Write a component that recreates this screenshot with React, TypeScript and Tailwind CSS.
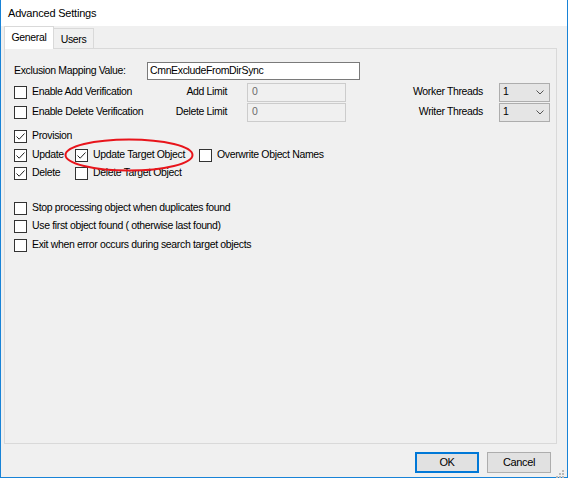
import React from "react";

const Check = ({ checked = false }: { checked?: boolean }) => (
  <span className="relative flex h-[13px] w-[13px] shrink-0 items-center justify-center border border-[#333333] bg-white">
    {checked && (
      <svg width="11" height="11" viewBox="0 0 11 11" className="absolute left-0 top-0">
        <path d="M1.5 5.5 L4.2 8.2 L9.5 2.5" fill="none" stroke="#222" strokeWidth="1" />
      </svg>
    )}
  </span>
);

const CheckItem = ({ label, checked = false, className = "" }: { label?: string; checked?: boolean; className?: string }) => (
  <div className={`flex items-center gap-[5px] ${className}`}>
    <Check checked={checked} />
    {label && <span className="whitespace-nowrap">{label}</span>}
  </div>
);

const Select = () => (
  <div className="flex h-[19px] w-[51px] items-center justify-between border border-[#adadad] bg-[#e5e5e5] pl-[3px] pr-[5px]">
    <span>1</span>
    <svg width="8" height="5" viewBox="0 0 8 5">
      <path d="M0.5 0.5 L4 4 L7.5 0.5" fill="none" stroke="#555" strokeWidth="1" />
    </svg>
  </div>
);

const LimitInput = () => (
  <div className="flex h-[19px] w-[99px] items-center border border-[#cccccc] bg-[#f0f0f0] pl-[4px] text-[#6d6d6d]">0</div>
);

export default function App() {
  return (
    <div
      className="flex h-[478px] w-[568px] flex-col border-x border-b border-[#1883d7] bg-[#f0f0f0] text-[10.5px] tracking-[-0.35px] text-black"
      style={{ fontFamily: '"Liberation Sans", Arial, sans-serif' }}
    >
      {/* title bar */}
      <div className="flex h-[26px] items-center bg-white pl-[7px] text-[11px] tracking-[-0.2px]">Advanced Settings</div>

      {/* tabs */}
      <div className="flex h-[22px] items-end pl-[3px]">
        <div className="relative z-10 -mb-px flex h-[23px] w-[50px] items-center justify-center border border-b-0 border-[#d9d9d9] bg-white">
          General
        </div>
        <div className="flex h-[20px] w-[40px] items-center justify-center border border-b-0 border-l-0 border-[#d9d9d9] bg-[#f0f0f0] pt-[2px]">
          Users
        </div>
      </div>

      {/* panel */}
      <div className="relative ml-[3px] h-[396px] w-[553px] border border-[#d9d9d9] bg-[#f0f0f0] pl-[9px] pt-[13px]">
        <div className="flex h-[18px] items-center">
          <span className="w-[133px]">Exclusion Mapping Value:</span>
          <div className="flex h-[18px] w-[213px] items-center border border-[#7a7a7a] bg-white pl-[2px]">CmnExcludeFromDirSync</div>
        </div>

        <div className="mt-[2px] flex h-[20px] items-center">
          <div className="flex w-[213px] items-center justify-between">
            <CheckItem label="Enable Add Verification" />
            <span>Add Limit</span>
          </div>
          <div className="ml-[20px]">
            <LimitInput />
          </div>
          <span className="w-[137px] text-right">Worker Threads</span>
          <div className="ml-[16px]">
            <Select />
          </div>
        </div>

        <div className="flex h-[20px] items-center">
          <div className="flex w-[213px] items-center justify-between">
            <CheckItem label="Enable Delete Verification" />
            <span>Delete Limit</span>
          </div>
          <div className="ml-[20px]">
            <LimitInput />
          </div>
          <span className="w-[137px] text-right">Writer Threads</span>
          <div className="ml-[16px]">
            <Select />
          </div>
        </div>

        <div className="mt-[5px] flex h-[18px] items-center">
          <CheckItem label="Provision" checked />
        </div>
        <div className="mt-px flex h-[18px] items-center">
          <CheckItem label="Update" checked className="w-[61px]" />
          <CheckItem label="Update Target Object" checked className="w-[124px]" />
          <CheckItem label="Overwrite Object Names" />
        </div>
        <div className="flex h-[18px] items-center">
          <CheckItem label="Delete" checked className="w-[61px]" />
          <CheckItem label="Delete Target Object" />
        </div>

        <div className="mt-[17px] flex h-[18px] items-center">
          <CheckItem label="Stop processing object when duplicates found" />
        </div>
        <div className="flex h-[18px] items-center">
          <CheckItem label="Use first object found ( otherwise last found)" />
        </div>
        <div className="mt-px flex h-[18px] items-center">
          <CheckItem label="Exit when error occurs during search target objects" />
        </div>

        {/* red annotation ellipse */}
        <svg className="pointer-events-none absolute left-[58px] top-[88px]" width="132" height="36" viewBox="0 0 132 36">
          <ellipse cx="66" cy="18" rx="63.5" ry="15.5" fill="none" stroke="#e8141b" strokeWidth="2" />
        </svg>
      </div>

      {/* buttons */}
      <div className="relative mt-[8px] flex justify-end gap-[8px] pr-[16px]">
        <button className="h-[21px] w-[64px] border-2 border-[#0078d7] bg-[#e1e1e1] text-[11px]">OK</button>
        <button className="h-[21px] w-[64px] border border-[#adadad] bg-[#e1e1e1] text-[11px]">Cancel</button>
        <svg className="absolute bottom-[-6px] right-[2px]" width="10" height="10" viewBox="0 0 10 10">
          <rect x="7" y="1" width="2" height="2" fill="#b9b9b9" />
          <rect x="4" y="4" width="2" height="2" fill="#b9b9b9" />
          <rect x="7" y="4" width="2" height="2" fill="#b9b9b9" />
          <rect x="1" y="7" width="2" height="2" fill="#b9b9b9" />
          <rect x="4" y="7" width="2" height="2" fill="#b9b9b9" />
          <rect x="7" y="7" width="2" height="2" fill="#b9b9b9" />
        </svg>
      </div>
    </div>
  );
}
